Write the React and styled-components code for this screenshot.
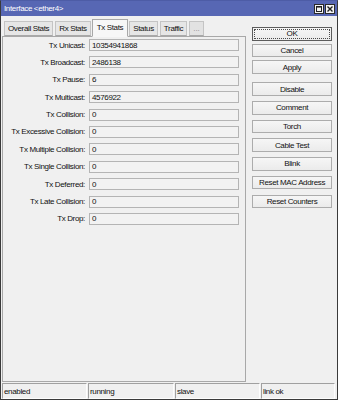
import { Fragment } from "react";
import styled, { createGlobalStyle } from "styled-components";

const GlobalStyle = createGlobalStyle`
	* {
		box-sizing: border-box;
	}
	body {
		margin: 0;
		background: #f0f0f0;
		font-family: "Liberation Sans", Arial, sans-serif;
		font-size: 8px;
		letter-spacing: -0.35px;
		color: #111;
	}
`;

const Window = styled.div`
	width: 338px;
	height: 400px;
	display: flex;
	flex-direction: column;
	border: 1px solid #3a3a3a;
	border-top-color: #4d5ca6;
	background: #f0f0f0;
`;

const TitleBar = styled.div`
	height: 15px;
	flex-shrink: 0;
	display: flex;
	align-items: center;
	justify-content: space-between;
	padding: 0 2px 0 3px;
	background: #5767b4;
	color: #fff;
`;

const TitleButtons = styled.div`
	display: flex;
	gap: 1px;
`;

const TitleButton = styled.div`
	width: 10px;
	height: 10px;
	background: #f4f4f4;
	border: 1px solid #2a2a2a;
	display: flex;
	align-items: center;
	justify-content: center;
`;

const Body = styled.div`
	flex: 1;
	display: flex;
	padding-top: 3px;
	min-height: 0;
`;

const LeftCol = styled.div`
	width: 244px;
	margin-left: 1px;
	display: flex;
	flex-direction: column;
`;

const Tabs = styled.div`
	height: 17px;
	display: flex;
	align-items: flex-end;
	padding-left: 2px;
	position: relative;
	z-index: 1;
`;

const Tab = styled.div`
	height: ${(p) => (p.$active ? "18px" : "15px")};
	margin-bottom: ${(p) => (p.$active ? "-1px" : "0")};
	margin-right: ${(p) => (p.$active ? "1px" : "2px")};
	margin-left: ${(p) => (p.$active ? "-1px" : "0")};
	padding: ${(p) => (p.$active ? "0 4px 2px" : "0 3px")};
	display: flex;
	align-items: center;
	border: 1px solid ${(p) => (p.$active ? "#a8a8a8" : "#c4c4c4")};
	border-bottom-color: ${(p) => (p.$active ? "#f7f7f7" : "#a8a8a8")};
	background: ${(p) => (p.$active ? "#f7f7f7" : p.$disabled ? "#e2e2e2" : "#e6e6e6")};
	color: ${(p) => (p.$disabled ? "#8c8c8c" : "#111")};
	letter-spacing: ${(p) => (p.$disabled ? "0" : "-0.35px")};
	white-space: nowrap;
`;

const Panel = styled.div`
	flex: 1;
	border: 1px solid #a8a8a8;
	background: #f0f0f0;
	padding: 2px 5px 0 0;
	display: grid;
	grid-template-columns: 82px 150px;
	column-gap: 4px;
	row-gap: 5.4px;
	grid-auto-rows: 12px;
	align-content: start;
`;

const Label = styled.div`
	text-align: right;
	align-self: center;
	white-space: nowrap;
`;

const Field = styled.div`
	height: 12px;
	border: 1px solid #b4b4b4;
	background: #f2f2f2;
	padding-left: 2px;
	display: flex;
	align-items: center;
`;

const RightCol = styled.div`
	flex: 1;
	padding: 8px 0 0 6px;
	display: flex;
	flex-direction: column;
`;

const ButtonGroup = styled.div`
	width: 80px;
	display: flex;
	flex-direction: column;
	gap: ${(p) => p.$gap}px;
	margin-bottom: 8.5px;
`;

const Button = styled.div`
	height: 13.5px;
	display: flex;
	align-items: center;
	justify-content: center;
	border: 1px solid ${(p) => (p.$default ? "#5c5c5c" : "#acacac")};
	background: linear-gradient(#f6f6f6, #ebebeb);
	position: relative;

	&::after {
		content: "";
		display: ${(p) => (p.$default ? "block" : "none")};
		position: absolute;
		inset: 1px;
		border: 1px dotted #4a4a4a;
	}
`;

const StatusBar = styled.div`
	height: 17px;
	flex-shrink: 0;
	display: flex;
	gap: 1px;
	padding: 1px 0 0 1px;
`;

const StatusCell = styled.div`
	width: ${(p) => p.$w}px;
	height: 16px;
	border: 1px solid #fdfdfd;
	border-top-color: #a0a0a0;
	border-left-color: #a0a0a0;
	padding-left: 1px;
	display: flex;
	align-items: center;
`;

const tabs = ["Overall Stats", "Rx Stats", "Tx Stats", "Status", "Traffic"];

const stats = [
	["Tx Unicast:", "10354941868"],
	["Tx Broadcast:", "2486138"],
	["Tx Pause:", "6"],
	["Tx Multicast:", "4576922"],
	["Tx Collision:", "0"],
	["Tx Excessive Collision:", "0"],
	["Tx Multiple Collision:", "0"],
	["Tx Single Collision:", "0"],
	["Tx Deferred:", "0"],
	["Tx Late Collision:", "0"],
	["Tx Drop:", "0"],
];

const status = [
	["enabled", 85],
	["running", 86],
	["slave", 85],
	["link ok", 74],
];

function App() {
	return (
		<>
			<GlobalStyle />
			<Window>
				<TitleBar>
					<span>Interface &lt;ether4&gt;</span>
					<TitleButtons>
						<TitleButton>
							<svg width="6" height="6" viewBox="0 0 6 6">
								<rect x="0.5" y="0.5" width="5" height="5" fill="none" stroke="#222" />
								<line x1="0" y1="1" x2="6" y2="1" stroke="#222" strokeWidth="1.2" />
							</svg>
						</TitleButton>
						<TitleButton>
							<svg width="6" height="6" viewBox="0 0 6 6">
								<path d="M0.5 0.5 L5.5 5.5 M5.5 0.5 L0.5 5.5" stroke="#222" strokeWidth="1.4" />
							</svg>
						</TitleButton>
					</TitleButtons>
				</TitleBar>

				<Body>
					<LeftCol>
						<Tabs>
							{tabs.map((t) => (
								<Tab key={t} $active={t === "Tx Stats"}>
									{t}
								</Tab>
							))}
							<Tab $disabled>...</Tab>
						</Tabs>
						<Panel>
							{stats.map(([label, value]) => (
								<Fragment key={label}>
									<Label>{label}</Label>
									<Field>{value}</Field>
								</Fragment>
							))}
						</Panel>
					</LeftCol>

					<RightCol>
						<ButtonGroup $gap={3.2}>
							<Button $default>OK</Button>
							<Button>Cancel</Button>
							<Button>Apply</Button>
						</ButtonGroup>
						<ButtonGroup $gap={5.2}>
							<Button>Disable</Button>
							<Button>Comment</Button>
							<Button>Torch</Button>
							<Button>Cable Test</Button>
							<Button>Blink</Button>
							<Button>Reset MAC Address</Button>
							<Button>Reset Counters</Button>
						</ButtonGroup>
					</RightCol>
				</Body>

				<StatusBar>
					{status.map(([s, w]) => (
						<StatusCell key={s} $w={w}>
							{s}
						</StatusCell>
					))}
				</StatusBar>
			</Window>
		</>
	);
}

export default App;
